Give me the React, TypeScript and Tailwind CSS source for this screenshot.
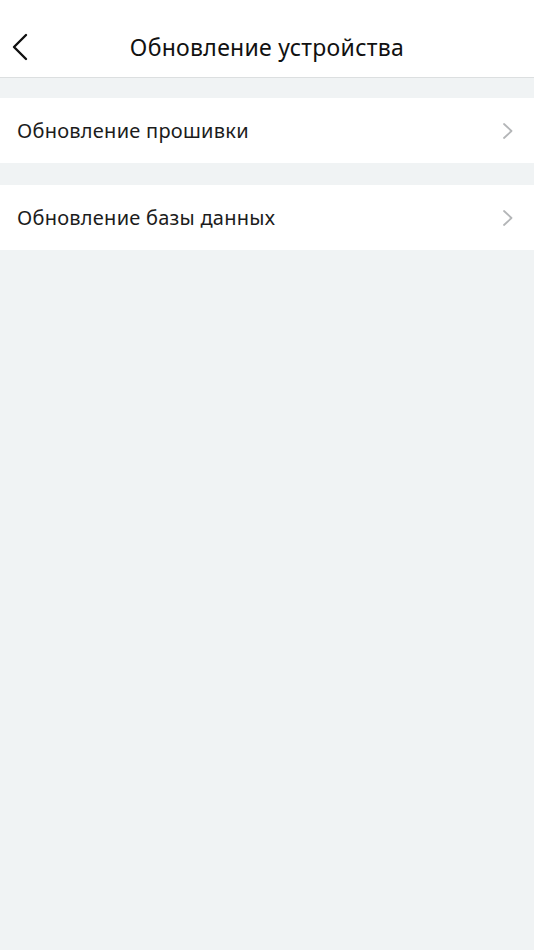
import React from "react";

function Chevron() {
  return (
    <svg width="12" height="18" viewBox="0 0 12 18" fill="none">
      <path d="M2 2l7.5 7L2 16" stroke="#b4b6b8" strokeWidth="1.8" strokeLinecap="round" strokeLinejoin="round" />
    </svg>
  );
}

function Row({ label }: { label: string }) {
  return (
    <div className="flex h-[65px] items-center justify-between bg-white pl-[17px] pr-[20px]">
      <span className="text-[20px] leading-none tracking-[0.25px] text-[#1c1c1c]">{label}</span>
      <Chevron />
    </div>
  );
}

export default function App() {
  return (
    <div
      className="flex min-h-[950px] w-[534px] flex-col bg-[#f0f3f4]"
      style={{ fontFamily: '"Noto Sans", "Open Sans", sans-serif' }}
    >
      <div className="relative flex h-[78px] items-center justify-center border-b border-[#dcdfe0] bg-white pt-[18px]">
        <div className="absolute left-[11px] top-[33px]">
          <svg width="18" height="28" viewBox="0 0 18 28" fill="none">
            <path d="M15 2L3 14l12 12" stroke="#111" strokeWidth="2.4" strokeLinecap="round" strokeLinejoin="round" />
          </svg>
        </div>
        <span className="text-[23px] leading-none tracking-[0.3px] text-[#111]">Обновление устройства</span>
      </div>
      <div className="h-[20px]" />
      <Row label="Обновление прошивки" />
      <div className="h-[22px]" />
      <Row label="Обновление базы данных" />
    </div>
  );
}
